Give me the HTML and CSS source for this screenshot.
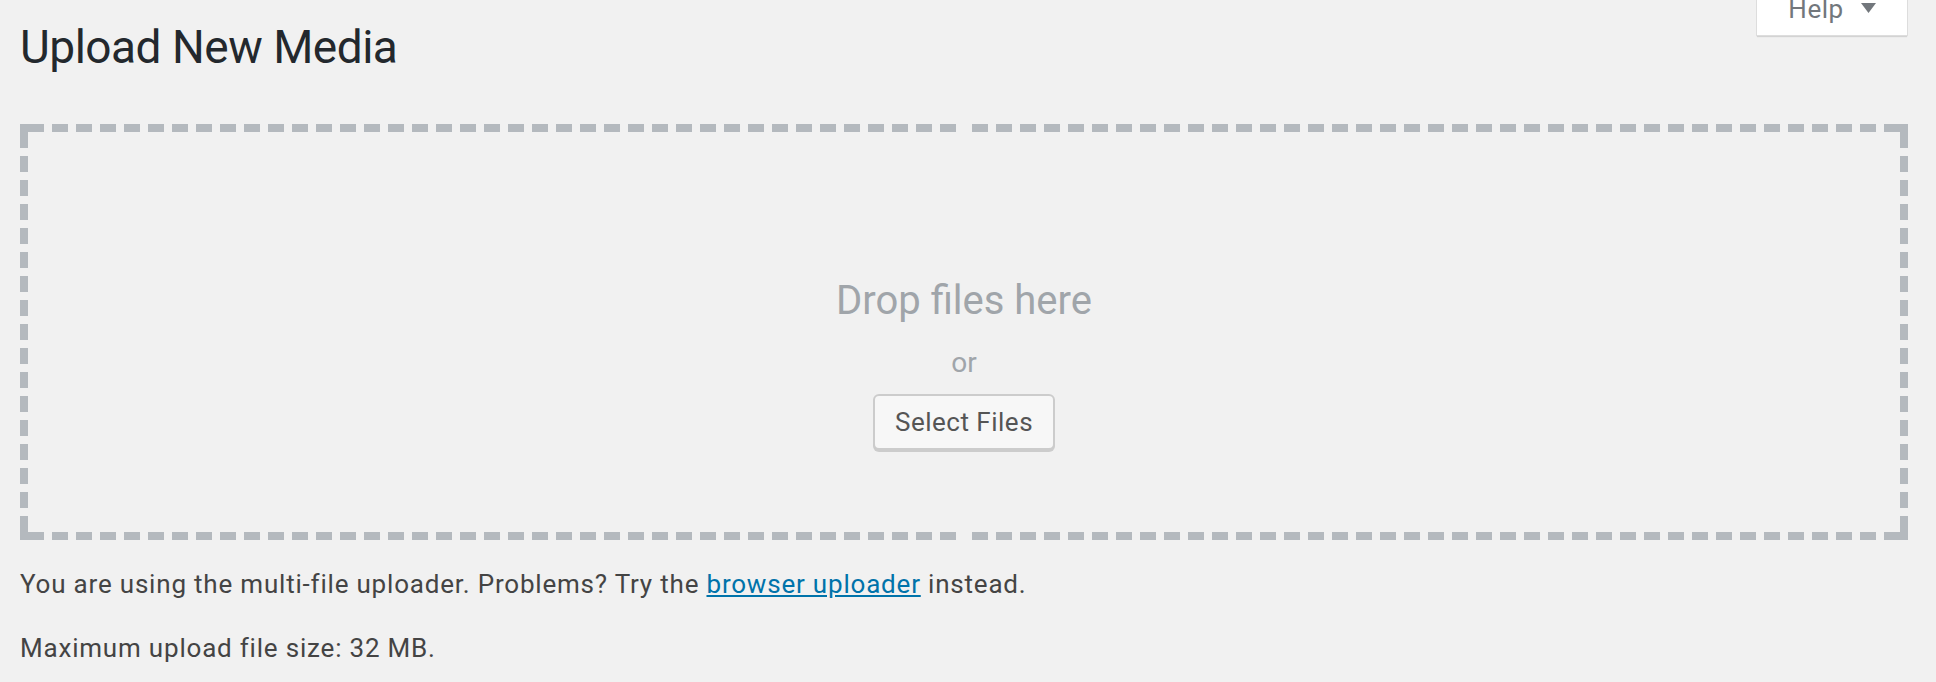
FILE: index.html
```html
<!DOCTYPE html>
<html lang="en">
<head>
<meta charset="utf-8">
<title>Upload New Media</title>
<link rel="stylesheet" href="styles.css">
</head>
<body>
<div class="wrap">
  <div class="header">
    <h1 class="title">Upload New Media</h1>
    <button class="help-tab" type="button">
      <span class="help-label">Help</span>
      <svg class="help-arrow" width="15" height="10" viewBox="0 0 15 10" aria-hidden="true"><polygon points="0,0 15,0 7.5,10" fill="#72777c"/></svg>
    </button>
  </div>
  <div class="drop-area">
    <div class="drop-inside">
      <p class="drop-info">Drop files here</p>
      <p class="drop-or">or</p>
      <button class="button" type="button">Select Files</button>
    </div>
  </div>
  <p class="note">You are using the multi-file uploader. Problems? Try the <a href="#" class="link">browser uploader</a> instead.</p>
  <p class="note">Maximum upload file size: 32 MB.</p>
</div>
</body>
</html>
```
FILE: styles.css
```css
html, body {
  margin: 0;
  padding: 0;
  background: #f1f1f1;
}
body {
  font-family: Roboto, "Liberation Sans", Arial, sans-serif;
  color: #444;
  overflow: hidden;
}
.wrap {
  padding: 0 28px 0 20px;
}
.header {
  display: flex;
  justify-content: space-between;
  align-items: flex-start;
}
.title {
  margin: 0;
  padding: 18px 0 8px;
  font-size: 46px;
  line-height: 58px;
  font-weight: 400;
  letter-spacing: -0.5px;
  color: #23282d;
}
.help-tab {
  margin-top: -20px;
  box-sizing: border-box;
  height: 56px;
  width: 152px;
  padding: 7px 0 0 0;
  display: flex;
  align-items: flex-start;
  justify-content: center;
  gap: 17px;
  background: #fff;
  border: 1px solid #ddd;
  border-top: none;
  box-shadow: 0 2px 1px -1px rgba(0, 0, 0, 0.12);
  font-family: inherit;
  font-size: 26px;
  line-height: 44px;
  letter-spacing: 0.5px;
  color: #72777c;
  cursor: pointer;
}
.help-label {
  display: block;
}
.help-arrow {
  display: block;
  margin-top: 16px;
}
.drop-area {
  --dash: #b4b9be;
  margin-top: 40px;
  height: 416px;
  box-sizing: border-box;
  padding: 8px;
  background:
    linear-gradient(var(--dash), var(--dash)) left top / 8px 8px no-repeat,
    linear-gradient(var(--dash), var(--dash)) right top / 8px 8px no-repeat,
    linear-gradient(var(--dash), var(--dash)) left bottom / 8px 8px no-repeat,
    linear-gradient(var(--dash), var(--dash)) right bottom / 8px 8px no-repeat,
    repeating-linear-gradient(to right, transparent 0 8px, var(--dash) 8px 24px) left top / 50% 8px no-repeat,
    repeating-linear-gradient(to left, transparent 0 8px, var(--dash) 8px 24px) right top / 50% 8px no-repeat,
    repeating-linear-gradient(to right, transparent 0 8px, var(--dash) 8px 24px) left bottom / 50% 8px no-repeat,
    repeating-linear-gradient(to left, transparent 0 8px, var(--dash) 8px 24px) right bottom / 50% 8px no-repeat,
    repeating-linear-gradient(to bottom, transparent 0 8px, var(--dash) 8px 24px) left top / 8px 50% no-repeat,
    repeating-linear-gradient(to top, transparent 0 8px, var(--dash) 8px 24px) left bottom / 8px 50% no-repeat,
    repeating-linear-gradient(to bottom, transparent 0 8px, var(--dash) 8px 24px) right top / 8px 50% no-repeat,
    repeating-linear-gradient(to top, transparent 0 8px, var(--dash) 8px 24px) right bottom / 8px 50% no-repeat;
}
.drop-inside {
  display: flex;
  flex-direction: column;
  align-items: center;
}
.drop-info {
  margin: 141px 0 0;
  font-size: 40px;
  line-height: 56px;
  color: #a0a5aa;
}
.drop-or {
  margin: 13px 0 0;
  font-size: 28px;
  line-height: 42px;
  color: #a0a5aa;
}
.button {
  margin-top: 10px;
  box-sizing: border-box;
  height: 56px;
  padding: 0 20px 2px;
  font-family: inherit;
  font-size: 26px;
  line-height: 52px;
  letter-spacing: 0.5px;
  color: #555;
  background: #f7f7f7;
  border: 2px solid #ccc;
  border-radius: 6px;
  box-shadow: 0 2px 0 #ccc;
  cursor: pointer;
}
.note {
  margin: 25px 0 0;
  font-size: 26px;
  line-height: 39px;
  letter-spacing: 0.8px;
  color: #444;
}
.link {
  color: #0073aa;
  text-decoration: underline;
}
```
